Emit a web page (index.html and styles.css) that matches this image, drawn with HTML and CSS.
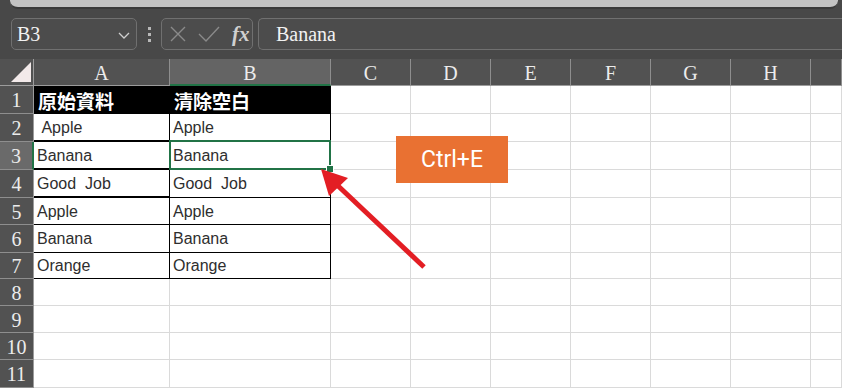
FILE: index.html
```html
<!DOCTYPE html>
<html>
<head>
  <meta charset="utf-8">
  <title>清除空白</title>
  <link rel="stylesheet" href="styles.css">
</head>
<body>
  <div class="window">
    <div class="ribbon"></div>

    <div class="formula-bar">
      <div class="name-box">
        <span>B3</span>
        <svg class="chevron" width="12" height="7" viewBox="0 0 12 7"><path d="M1 1 L6 6 L11 1" fill="none" stroke="#cfcfcf" stroke-width="1.3"/></svg>
      </div>
      <div class="dots"><i></i><i></i><i></i></div>
      <div class="fx-box">
        <svg width="18" height="16" viewBox="0 0 18 16"><path d="M2 1 L16 15 M16 1 L2 15" stroke="#8a8a8a" stroke-width="1.4"/></svg>
        <svg width="22" height="16" viewBox="0 0 22 16"><path d="M1 8 L8 15 L21 1" fill="none" stroke="#8a8a8a" stroke-width="1.4"/></svg>
        <span class="fx">fx</span>
      </div>
      <div class="formula-input">Banana</div>
    </div>

    <div class="sheet">
      <div class="corner"><div class="triangle"></div></div>
      <div class="col-head">A</div>
      <div class="col-head active">B</div>
      <div class="col-head">C</div>
      <div class="col-head">D</div>
      <div class="col-head">E</div>
      <div class="col-head">F</div>
      <div class="col-head">G</div>
      <div class="col-head">H</div>
      <div class="col-head"></div>

      <div class="row-head">1</div>
      <div class="cell title">原始資料</div>
      <div class="cell title">清除空白</div>
      <div class="cell"></div><div class="cell"></div><div class="cell"></div><div class="cell"></div><div class="cell"></div><div class="cell"></div><div class="cell"></div>

      <div class="row-head">2</div>
      <div class="cell data thick">&nbsp;Apple</div>
      <div class="cell data">Apple</div>
      <div class="cell"></div><div class="cell"></div><div class="cell"></div><div class="cell"></div><div class="cell"></div><div class="cell"></div><div class="cell"></div>

      <div class="row-head active">3</div>
      <div class="cell data thick">Banana</div>
      <div class="cell data">Banana</div>
      <div class="cell"></div><div class="cell"></div><div class="cell"></div><div class="cell"></div><div class="cell"></div><div class="cell"></div><div class="cell"></div>

      <div class="row-head">4</div>
      <div class="cell data thick">Good&nbsp;&nbsp;Job</div>
      <div class="cell data">Good&nbsp;&nbsp;Job</div>
      <div class="cell"></div><div class="cell"></div><div class="cell"></div><div class="cell"></div><div class="cell"></div><div class="cell"></div><div class="cell"></div>

      <div class="row-head">5</div>
      <div class="cell data">Apple</div>
      <div class="cell data">Apple</div>
      <div class="cell"></div><div class="cell"></div><div class="cell"></div><div class="cell"></div><div class="cell"></div><div class="cell"></div><div class="cell"></div>

      <div class="row-head">6</div>
      <div class="cell data">Banana</div>
      <div class="cell data">Banana</div>
      <div class="cell"></div><div class="cell"></div><div class="cell"></div><div class="cell"></div><div class="cell"></div><div class="cell"></div><div class="cell"></div>

      <div class="row-head">7</div>
      <div class="cell data">Orange</div>
      <div class="cell data">Orange</div>
      <div class="cell"></div><div class="cell"></div><div class="cell"></div><div class="cell"></div><div class="cell"></div><div class="cell"></div><div class="cell"></div>

      <div class="row-head">8</div>
      <div class="cell"></div><div class="cell"></div><div class="cell"></div><div class="cell"></div><div class="cell"></div><div class="cell"></div><div class="cell"></div><div class="cell"></div><div class="cell"></div>

      <div class="row-head">9</div>
      <div class="cell"></div><div class="cell"></div><div class="cell"></div><div class="cell"></div><div class="cell"></div><div class="cell"></div><div class="cell"></div><div class="cell"></div><div class="cell"></div>

      <div class="row-head">10</div>
      <div class="cell"></div><div class="cell"></div><div class="cell"></div><div class="cell"></div><div class="cell"></div><div class="cell"></div><div class="cell"></div><div class="cell"></div><div class="cell"></div>

      <div class="row-head">11</div>
      <div class="cell"></div><div class="cell"></div><div class="cell"></div><div class="cell"></div><div class="cell"></div><div class="cell"></div><div class="cell"></div><div class="cell"></div><div class="cell"></div>

      <!-- active cell B3 -->
      <div class="selection"><div class="fill-handle"></div></div>
    </div>

    <div class="callout">Ctrl+E</div>

    <svg class="arrow" width="842" height="388" viewBox="0 0 842 388">
      <line x1="424" y1="267" x2="335" y2="183" stroke="#e31e24" stroke-width="5"/>
      <polygon points="321,169 348,178 329,196" fill="#e31e24"/>
    </svg>
  </div>
</body>
</html>
```

FILE: styles.css
```css
body {
  margin: 0;
  padding: 0;
  background-color: #484848;
  font-family: "Liberation Sans", Arial, sans-serif;
}

.window {
  position: relative;
  width: 842px;
  height: 388px;
  overflow: hidden;
}

.ribbon {
  height: 7px;
  margin: 0 4px 0 10px;
  background-color: #c3c3c3;
  border-radius: 0 0 8px 8px;
  border-bottom: 2px solid #3a3a3a;
}

.formula-bar {
  display: flex;
  align-items: center;
  height: 32px;
  padding: 9px 0 9px 11px;
}

.name-box,
.fx-box,
.formula-input {
  box-sizing: border-box;
  height: 32px;
  border: 1px solid #707070;
  border-radius: 5px;
  background-color: #4c4c4c;
  color: #f2f2f2;
  font-family: "Liberation Serif", "Times New Roman", serif;
  font-size: 20px;
}

.name-box {
  display: flex;
  align-items: center;
  justify-content: space-between;
  width: 126px;
  padding: 0 6px 0 5px;
}

.chevron {
  margin-top: 2px;
}

.dots {
  display: flex;
  flex-direction: column;
  gap: 3px;
  margin: 0 10px 0 11px;
}

.dots i {
  display: block;
  width: 3px;
  height: 3px;
  background-color: #b8b8b8;
}

.fx-box {
  display: flex;
  align-items: center;
  gap: 11px;
  width: 92px;
  padding: 0 0 0 7px;
}

.fx {
  font-style: italic;
  font-weight: bold;
  color: #d0d0d0;
  font-size: 21px;
  margin-left: 1px;
}

.formula-input {
  flex: 1;
  display: flex;
  align-items: center;
  margin-left: 5px;
  padding-left: 17px;
  border-right: none;
  border-radius: 5px 0 0 5px;
}

.sheet {
  position: relative;
  display: grid;
  grid-template-columns: 34px 136px 161px repeat(6, 80px) 1fr;
  grid-template-rows: 27px 28px 28px 28px 28px 27px 28px 26px 27px 27px 27px 28px;
}

.sheet > div {
  box-sizing: border-box;
}

.corner {
  background-color: #525252;
  border-right: 1px solid #9c9c9c;
  border-bottom: 1px solid #9c9c9c;
  position: relative;
}

.triangle {
  position: absolute;
  left: 11px;
  top: 3px;
  width: 0;
  height: 0;
  border-left: 20px solid transparent;
  border-bottom: 20px solid #f3eaea;
}

.col-head,
.row-head {
  display: flex;
  align-items: center;
  justify-content: center;
  background-color: #525252;
  color: #ececec;
  font-family: "Liberation Serif", "Times New Roman", serif;
  font-size: 20px;
}

.col-head {
  padding-top: 3px;
  border-right: 1px solid #8e8e8e;
  border-bottom: 1px solid #9c9c9c;
}

.col-head.active {
  background-color: #646464;
  border-bottom: 2px solid #217346;
}

.row-head {
  padding-top: 2px;
  border-right: 1px solid #9c9c9c;
  border-bottom: 1px solid #8e8e8e;
}

.row-head.active {
  background-color: #6a6a6a;
  border-right: 2px solid #217346;
}

.cell {
  display: flex;
  align-items: center;
  padding: 1px 3px 0;
  background-color: #fff;
  border-right: 1px solid #dadada;
  border-bottom: 1px solid #dadada;
  color: #2e2e2e;
  font-size: 16px;
  white-space: nowrap;
}

.cell.data {
  border-right-color: #000;
  border-bottom-color: #000;
}

.cell.thick {
  border-bottom-width: 2px;
}

.cell.title {
  background-color: #000;
  border-right-color: #000;
  border-bottom-color: #000;
  color: #fff;
  font-family: "Noto Sans CJK TC", "Noto Sans CJK SC", sans-serif;
  font-weight: bold;
  font-size: 19px;
  padding-left: 4px;
}

.selection {
  position: absolute;
  left: 169px;
  top: 81px;
  width: 162px;
  height: 30px;
  box-sizing: border-box;
  border: 2px solid #217346;
}

.fill-handle {
  position: absolute;
  right: -5px;
  bottom: -5px;
  width: 6px;
  height: 6px;
  background-color: #217346;
  border: 1px solid #fff;
}

.callout {
  position: absolute;
  left: 396px;
  top: 136px;
  width: 112px;
  height: 47px;
  display: flex;
  align-items: center;
  justify-content: center;
  background-color: #e97132;
  color: #fff;
  font-family: Roboto, "Liberation Sans", sans-serif;
  font-size: 23px;
}

.arrow {
  position: absolute;
  left: 0;
  top: 0;
  pointer-events: none;
}
```
